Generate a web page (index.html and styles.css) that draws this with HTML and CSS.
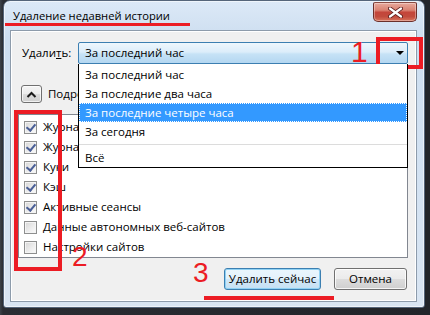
FILE: index.html
```html
<!DOCTYPE html>
<html lang="ru">
<head>
<meta charset="utf-8">
<title>Удаление недавней истории</title>
<link rel="stylesheet" href="styles.css">
</head>
<body>
<div class="window">
  <div class="titlebar">
    <span class="title">Удаление недавней истории</span>
    <span class="close">
      <svg width="15" height="11" viewBox="0 0 15 11"><path d="M2 1.5 L13 9.5 M13 1.5 L2 9.5" stroke="#5b1d1d" stroke-width="4" stroke-linecap="round"/><path d="M2 1.5 L13 9.5 M13 1.5 L2 9.5" stroke="#ffffff" stroke-width="2.2" stroke-linecap="round"/></svg>
    </span>
  </div>
  <div class="client">
    <div class="row-range">
      <span class="label">Удали<u>т</u>ь:</span>
      <div class="combo">
        <span class="combo-value">За последний час</span>
        <span class="combo-arrow"></span>
        <ul class="dropdown">
          <li class="opt">За последний час</li>
          <li class="opt">За последние два часа</li>
          <li class="opt selected">За последние четыре часа</li>
          <li class="opt">За сегодня</li>
          <li class="sep"></li>
          <li class="opt">Всё</li>
        </ul>
      </div>
    </div>
    <div class="row-details">
      <span class="expander"><svg width="11" height="7" viewBox="0 0 11 7"><path d="M1.5 6 L5.5 2 L9.5 6" fill="none" stroke="#1a1a1a" stroke-width="2"/></svg></span>
      <span class="details-label">Подробности</span>
    </div>
    <ul class="items">
      <li class="item"><span class="cb on"></span>Журнал посещений и загрузок</li>
      <li class="item"><span class="cb on"></span>Журнал форм и поиска</li>
      <li class="item"><span class="cb on"></span>Куки</li>
      <li class="item"><span class="cb on"></span>Кэш</li>
      <li class="item"><span class="cb on"></span>Активные сеансы</li>
      <li class="item"><span class="cb"></span>Данные автономных веб-сайтов</li>
      <li class="item"><span class="cb"></span>Настройки сайтов</li>
    </ul>
    <div class="buttons">
      <span class="btn btn-default">Удалить сейчас</span>
      <span class="btn btn-cancel">Отмена</span>
    </div>
  </div>
</div>

<div class="anno-line anno-line-title"></div>
<div class="anno-box anno-box-1"></div>
<div class="anno-num anno-num-1">1</div>
<div class="anno-box anno-box-2"></div>
<div class="anno-num anno-num-2">2</div>
<div class="anno-num anno-num-3">3</div>
<div class="anno-line anno-line-3"></div>
</body>
</html>
```

FILE: styles.css
```css
* { box-sizing: border-box; }
html, body { margin: 0; padding: 0; }
body {
  width: 430px;
  height: 315px;
  overflow: hidden;
  position: relative;
  background: linear-gradient(90deg, #3d4249 0px, #2a2d33 3px, #22252a 100%);
  font-family: "Open Sans", "Noto Sans", sans-serif;
  font-size: 11.5px;
  color: #000;
}
ul { list-style: none; margin: 0; padding: 0; }

.window {
  margin-left: 3px;
  width: 422px;
  height: 308px;
  border: 1px solid #55657a;
  border-radius: 7px 7px 3px 3px;
  background: linear-gradient(180deg, #dce9f7 0%, #cddef0 12%, #d3e2f2 60%, #d9e5f2 100%);
  box-shadow: inset 0 0 0 1px rgba(255,255,255,0.55);
  padding: 0 7px 5px 6px;
  display: flex;
  flex-direction: column;
}

.titlebar {
  height: 29px;
  display: flex;
  align-items: flex-start;
  padding-left: 3px;
}
.title {
  line-height: 16px;
  margin-top: 7px;
  font-size: 11.2px;
  color: #000;
}
.close {
  margin-left: auto;
  margin-top: 1px;
  width: 44px;
  height: 20px;
  border: 1px solid #6b2f2a;
  border-top-color: #8a4a42;
  border-radius: 2px 2px 5px 5px;
  background: linear-gradient(180deg, #e8a99c 0%, #d98272 40%, #c4453a 52%, #c14b3d 75%, #d8735b 100%);
  box-shadow: inset 0 0 0 1px rgba(255,255,255,0.35);
  display: flex;
  align-items: center;
  justify-content: center;
}

.client {
  flex: 1;
  border: 1px solid #8d9bab;
  background: #f0f0f0;
  box-shadow: inset 0 0 0 1px #ffffff;
  display: flex;
  flex-direction: column;
}

.row-range {
  display: flex;
  align-items: center;
  margin-top: 11px;
  padding-left: 11px;
  padding-right: 8px;
  height: 22px;
}
.label {
  flex: 0 0 56px;
  line-height: 16px;
}
.combo {
  position: relative;
  flex: 1;
  height: 22px;
  border: 1px solid #3c7fb1;
  border-radius: 2px;
  background: linear-gradient(180deg, #eef7fd 0%, #dcedfa 45%, #c6e2f6 55%, #b4d7f1 100%);
  display: flex;
  align-items: center;
  padding-left: 6px;
}
.combo-value { line-height: 16px; }
.combo-arrow {
  margin-left: auto;
  margin-right: 3px;
  width: 0;
  height: 0;
  border-left: 4px solid transparent;
  border-right: 4px solid transparent;
  border-top: 4px solid #000;
}

.dropdown {
  position: absolute;
  top: 21px;
  left: -1px;
  right: -1px;
  background: #fff;
  border: 1px solid #000;
  border-top: none;
  padding-top: 1px;
  z-index: 5;
}
.opt {
  height: 19px;
  line-height: 19px;
  padding-left: 6px;
}
.opt.selected {
  background: #3399ff;
  color: #fff;
  outline: 1px dotted #ffffff;
  outline-offset: -1px;
}
.sep {
  border-top: 1px solid #dcdcdc;
  margin-top: 3px;
  height: 4px;
}

.row-details {
  display: flex;
  align-items: center;
  margin-top: 21px;
  height: 18px;
  padding-left: 10px;
}
.expander {
  width: 21px;
  height: 18px;
  border: 1px solid #707070;
  border-radius: 3px;
  background: linear-gradient(180deg, #f4f4f4 0%, #ececec 50%, #dcdcdc 50%, #cfcfcf 100%);
  box-shadow: inset 0 0 0 1px rgba(255,255,255,0.7);
  display: flex;
  align-items: center;
  justify-content: center;
}
.details-label {
  margin-left: 6px;
  line-height: 16px;
}

.items {
  margin: 11px 8px 0 7px;
  height: 144px;
  border: 1px solid #828790;
  background: #fff;
  padding-top: 2px;
}
.item {
  height: 20px;
  display: flex;
  align-items: center;
  padding-left: 5px;
  line-height: 16px;
}
.cb {
  flex: 0 0 13px;
  width: 13px;
  height: 13px;
  margin-right: 6px;
  border: 1px solid #8e8f8f;
  background: linear-gradient(135deg, #d6d6d6 0%, #eeeeee 60%, #fbfbfb 100%);
  box-shadow: inset 0 0 0 1px #f4f4f4;
  position: relative;
}
.cb.on::after {
  content: "";
  position: absolute;
  left: 3px;
  top: 0px;
  width: 4px;
  height: 7px;
  border-right: 2px solid #4a5f97;
  border-bottom: 2px solid #4a5f97;
  transform: rotate(40deg);
}

.buttons {
  display: flex;
  justify-content: flex-end;
  gap: 13px;
  margin-top: 10px;
  padding-right: 9px;
}
.btn {
  height: 22px;
  border: 1px solid #707070;
  border-radius: 3px;
  background: linear-gradient(180deg, #f2f2f2 0%, #ebebeb 50%, #dddddd 50%, #cfcfcf 100%);
  box-shadow: inset 0 0 0 1px rgba(255,255,255,0.8);
  display: flex;
  align-items: center;
  justify-content: center;
  line-height: 16px;
}
.btn-default {
  width: 97px;
  border-color: #3c7fb1;
  background: linear-gradient(180deg, #eaf6fd 0%, #e3f1fb 50%, #d2e8f7 50%, #c5e0f3 100%);
  box-shadow: inset 0 0 0 1px #8fd1f3;
}
.btn-cancel { width: 73px; }

/* annotations overlaying the screenshot */
.anno-line {
  position: absolute;
  height: 3px;
  background: #ec1c24;
}
.anno-line-title { left: 5px; top: 23px; width: 185px; }
.anno-line-3 { left: 204px; top: 296px; width: 130px; height: 4px; }
.anno-box {
  position: absolute;
  border: 4px solid #ec1c24;
}
.anno-box-1 { left: 376px; top: 37px; width: 47px; height: 32px; }
.anno-box-2 { left: 14px; top: 110px; width: 48px; height: 161px; }
.anno-num {
  position: absolute;
  color: #ec1c24;
  font-family: "Liberation Sans", Arial, sans-serif;
  line-height: 1;
}
.anno-num-1 { left: 351px; top: 37px; font-size: 30px; }
.anno-num-2 { left: 72px; top: 243px; font-size: 28px; }
.anno-num-3 { left: 193px; top: 259px; font-size: 28px; }
```
